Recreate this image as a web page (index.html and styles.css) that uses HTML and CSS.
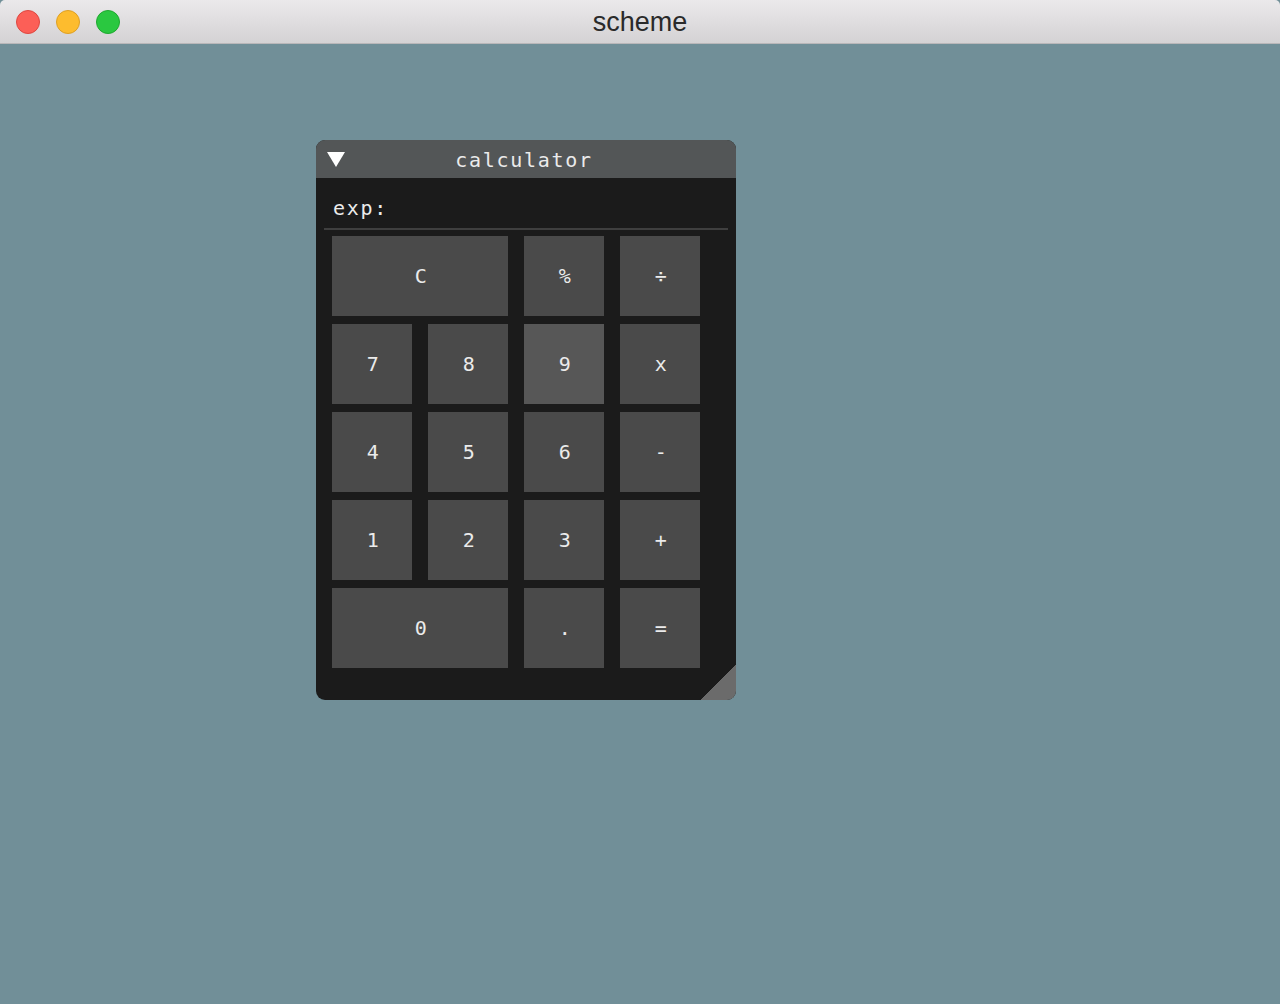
FILE: index.html
```html
<!DOCTYPE html>
<html>
<head>
<meta charset="utf-8">
<link rel="stylesheet" href="styles.css">
</head>
<body>
<div class="app">
  <div class="titlebar">
    <div class="lights">
      <span class="light red"></span>
      <span class="light yellow"></span>
      <span class="light green"></span>
    </div>
    <div class="apptitle">scheme</div>
  </div>
  <div class="desktop">
    <div class="win">
      <div class="win-head">
        <svg class="collapse" width="20" height="16" viewBox="0 0 20 16"><polygon points="1,1 19,1 10,16" fill="#ffffff"/></svg>
        <span class="win-title">calculator</span>
      </div>
      <div class="win-body">
        <div class="exp">exp:</div>
        <div class="sep"></div>
        <div class="pad">
          <div class="key wide">C</div>
          <div class="key">%</div>
          <div class="key">÷</div>
          <div class="key">7</div>
          <div class="key">8</div>
          <div class="key hover">9</div>
          <div class="key">x</div>
          <div class="key">4</div>
          <div class="key">5</div>
          <div class="key">6</div>
          <div class="key">-</div>
          <div class="key">1</div>
          <div class="key">2</div>
          <div class="key">3</div>
          <div class="key">+</div>
          <div class="key wide">0</div>
          <div class="key">.</div>
          <div class="key">=</div>
        </div>
      </div>
      <div class="grip"></div>
    </div>
  </div>
</div>
</body>
</html>
```
FILE: styles.css
```css
html, body {
  margin: 0;
  padding: 0;
  width: 1280px;
  height: 1004px;
  overflow: hidden;
  background: #718f98;
}
.app {
  width: 1280px;
  height: 1004px;
  display: flex;
  flex-direction: column;
}
.titlebar {
  height: 43px;
  border-bottom: 1px solid #b9b7b9;
  background: linear-gradient(#ebe9eb, #d4d2d4);
  border-radius: 5px 5px 0 0;
  position: relative;
  display: flex;
  align-items: center;
  justify-content: center;
  flex: none;
}
.lights {
  position: absolute;
  left: 16px;
  top: 10px;
  display: flex;
  gap: 16px;
}
.light {
  width: 24px;
  height: 24px;
  border-radius: 50%;
  box-sizing: border-box;
}
.red { background: #fc5f57; border: 1px solid #de4740; }
.yellow { background: #fdbc2e; border: 1px solid #dea024; }
.green { background: #2ac840; border: 1px solid #1fa82f; }
.apptitle {
  font-family: "Liberation Sans", Arial, sans-serif;
  font-size: 27px;
  color: #2a2a2a;
  margin-top: 1px;
}
.desktop {
  flex: 1;
  padding: 96px 0 0 316px;
}
.win {
  width: 420px;
  height: 560px;
  border-radius: 9px;
  background: #1b1b1b;
  overflow: hidden;
  position: relative;
  display: flex;
  flex-direction: column;
  font-family: "DejaVu Sans Mono", monospace;
  font-size: 20px;
  letter-spacing: 1.7px;
  color: #ebebeb;
}
.win-head {
  height: 38px;
  background: #535657;
  display: flex;
  align-items: center;
  justify-content: center;
  position: relative;
  flex: none;
}
.collapse {
  position: absolute;
  left: 10px;
  top: 11px;
}
.win-title {
  margin-left: -4px;
  margin-top: 1px;
}
.win-body {
  padding: 0 8px;
  display: flex;
  flex-direction: column;
}
.exp {
  height: 50px;
  line-height: 60px;
  padding-left: 9px;
  box-sizing: border-box;
}
.sep {
  height: 2px;
  background: #3f3f3f;
  margin-bottom: 6px;
}
.pad {
  display: grid;
  grid-template-columns: repeat(4, 80px);
  grid-auto-rows: 80px;
  column-gap: 16px;
  row-gap: 8px;
  padding-left: 8px;
}
.key {
  background: #4a4a4a;
  display: flex;
  align-items: center;
  justify-content: center;
  padding-left: 3px;
}
.key.wide { grid-column: span 2; }
.key.hover { background: #575757; }
.grip {
  position: absolute;
  right: 0;
  bottom: 0;
  width: 36px;
  height: 36px;
  background: linear-gradient(135deg, transparent 50%, #6b6b6b 50%);
}
```
